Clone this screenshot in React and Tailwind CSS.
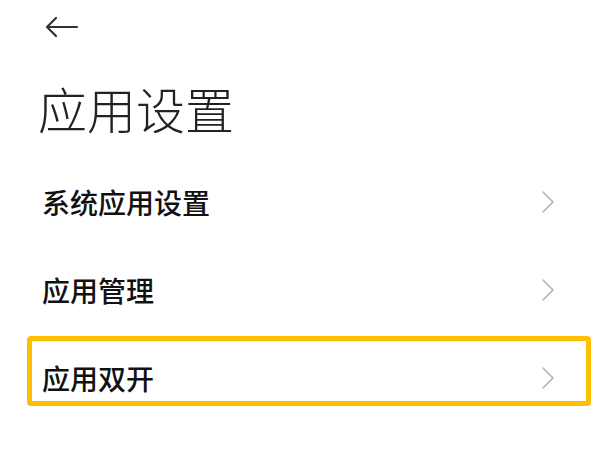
import React from "react";

const font = { fontFamily: '"Noto Sans CJK SC", "Noto Sans", sans-serif' };

function Chevron() {
  return (
    <svg width="14" height="24" viewBox="0 0 14 24" fill="none">
      <path d="M2 2 L12 12 L2 22" stroke="#b3b3b3" strokeWidth="1.6" strokeLinecap="round" strokeLinejoin="round" />
    </svg>
  );
}

function Row({ label, highlight }) {
  return (
    <div className="relative h-[88px] flex items-center justify-between pl-[42px] pr-[45px]">
      <span className="text-[28px] leading-[28px] font-medium text-[#111]">{label}</span>
      <Chevron />
      {highlight && (
        <div className="absolute left-[27px] right-[9px] top-[2px] h-[70px] border-[5px] border-[#ffbf00] rounded-[4px] pointer-events-none" />
      )}
    </div>
  );
}

export default function App() {
  const rows = ["系统应用设置", "应用管理", "应用双开"];

  return (
    <div className="w-[600px] h-[450px] bg-white overflow-hidden" style={font}>
      {/* header */}
      <div className="h-[53px] flex items-center pl-[45px]">
        <svg width="34" height="22" viewBox="0 0 34 22" fill="none">
          <path d="M2 11 H32 M11 2 L2 11 L11 20" stroke="#333" strokeWidth="2.2" strokeLinecap="round" strokeLinejoin="round" />
        </svg>
      </div>

      <h1 className="mt-[30px] pl-[38px] text-[49px] leading-[49px] font-light text-[#222]">应用设置</h1>

      <div className="mt-[26px]">
        {rows.map((r, i) => (
          <Row key={r} label={r} highlight={i === 2} />
        ))}
      </div>
    </div>
  );
}
